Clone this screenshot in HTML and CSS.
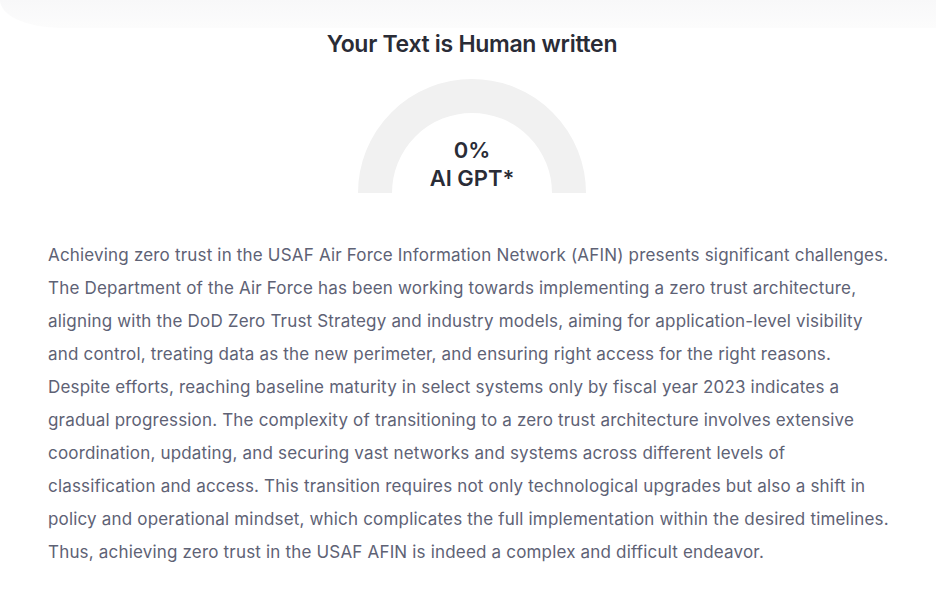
FILE: index.html
```html
<!DOCTYPE html>
<html>
<head>
    <link rel="stylesheet" href="styles.css">
</head>
<body>
    <div class="topbar"></div>
    <div class="result">
        <h2 class="title">Your Text is Human written</h2>
        <div class="gauge">
            <div class="arc"></div>
            <div class="score">
                <span>0%</span>
                <span>AI GPT*</span>
            </div>
        </div>
        <p class="text">Achieving zero trust in the USAF Air Force Information Network (AFIN) presents significant challenges. The Department of the Air Force has been working towards implementing a zero trust architecture, aligning with the DoD Zero Trust Strategy and industry models, aiming for application-level visibility and control, treating data as the new perimeter, and ensuring right access for the right reasons. Despite efforts, reaching baseline maturity in select systems only by fiscal year 2023 indicates a gradual progression. The complexity of transitioning to a zero trust architecture involves extensive coordination, updating, and securing vast networks and systems across different levels of classification and access. This transition requires not only technological upgrades but also a shift in policy and operational mindset, which complicates the full implementation within the desired timelines. Thus, achieving zero trust in the USAF AFIN is indeed a complex and difficult endeavor.</p>
    </div>
</body>
</html>
```

FILE: styles.css
```css
body {
    margin: 0;
    padding: 0;
    background-color: #ffffff;
    font-family: Inter, "Noto Sans", sans-serif;
    position: relative;
}

.topbar {
    position: absolute;
    top: 0;
    left: 0;
    right: 0;
    height: 28px;
    background: linear-gradient(#f8f8f9, #fcfcfc);
    border-bottom-left-radius: 60px 28px;
}

.result {
    position: relative;
    padding: 29px 40px 0 48px;
    display: flex;
    flex-direction: column;
    align-items: center;
}

.title {
    margin: 0;
    font-size: 23px;
    font-weight: 600;
    color: #2a2c36;
    letter-spacing: -0.3px;
    line-height: 30px;
}

.gauge {
    margin-top: 20px;
    width: 228px;
    height: 114px;
    position: relative;
    overflow: hidden;
}

.arc {
    width: 228px;
    height: 228px;
    box-sizing: border-box;
    border: 34px solid #f1f1f1;
    border-radius: 50%;
}

.score {
    position: absolute;
    left: 0;
    right: 0;
    top: 57px;
    display: flex;
    flex-direction: column;
    align-items: center;
    font-size: 22px;
    font-weight: 600;
    line-height: 28px;
    color: #2a2c36;
}

.text {
    align-self: stretch;
    margin: 46px 0 0 0;
    font-size: 17px;
    line-height: 33px;
    color: #5e6275;
    letter-spacing: 0.18px;
}
```
